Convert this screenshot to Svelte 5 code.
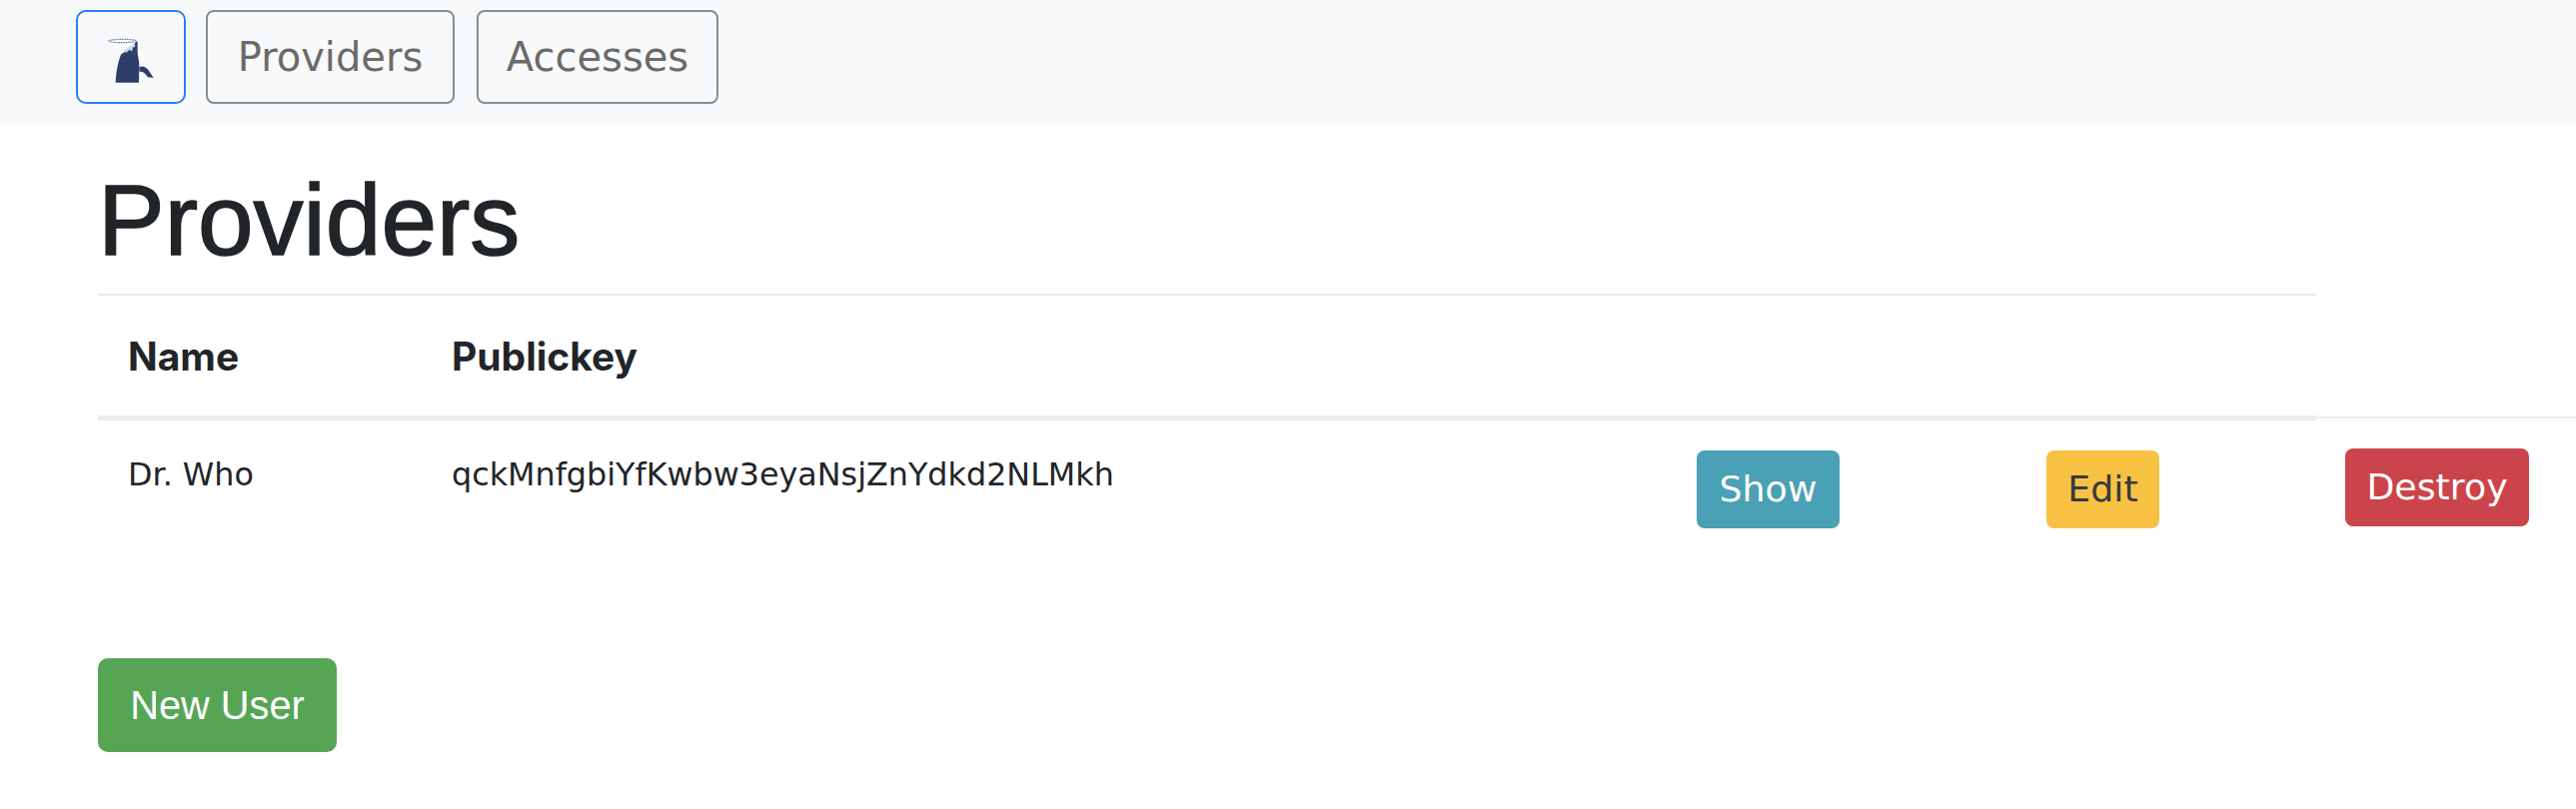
<script>
  let title = 'Providers';
  let rows = [{ name: 'Dr. Who', publickey: 'qckMnfgbiYfKwbw3eyaNsjZnYdkd2NLMkh' }];
</script>

<nav class="topbar">
  <button class="logo-btn" aria-label="Home">
    <svg width="60" height="60" viewBox="0 0 180 180">
      <ellipse cx="68" cy="33" rx="42" ry="5" fill="none" stroke="#5f6c90" stroke-width="3.5" stroke-dasharray="3 2" />
      <!-- body -->
      <path d="M47 158 C49 125 54 95 64 72 C78 66 98 52 108 36 L113 36 L113 70 C115 85 118 95 118 108 L117 158 Z" fill="#2f3d6b" />
      <!-- snowy head -->
      <path d="M66 70 C72 60 90 52 104 38 L106 50 L100 52 L96 64 L88 60 L80 68 L72 64 Z" fill="#c5d6ee" />
      <!-- fin -->
      <path d="M118 112 C128 106 140 112 148 124 L161 144 L144 142 C136 130 128 124 119 126 Z" fill="#2f3d6b" />
    </svg>
  </button>
  <button class="nav-btn providers">Providers</button>
  <button class="nav-btn accesses">Accesses</button>
</nav>

<main class="container">
  <h1>{title}</h1>
  <div class="rule"></div>
  <table>
    <colgroup>
      <col class="c-name" />
      <col class="c-key" />
      <col class="c-show" />
      <col class="c-edit" />
      <col class="c-destroy" />
    </colgroup>
    <thead>
      <tr>
        <th>Name</th>
        <th>Publickey</th>
        <th></th>
        <th></th>
        <th class="thin"></th>
      </tr>
    </thead>
    <tbody>
      {#each rows as row}
        <tr>
          <td>{row.name}</td>
          <td>{row.publickey}</td>
          <td class="act"><a class="btn show" href="#show">Show</a></td>
          <td class="act"><a class="btn edit" href="#edit">Edit</a></td>
          <td class="act high"><a class="btn destroy" href="#destroy">Destroy</a></td>
        </tr>
      {/each}
    </tbody>
  </table>
  <a class="new-user" href="#new">New User</a>
</main>

<style>
  :global(body) {
    background: #fff;
    overflow: hidden;
  }

  .topbar {
    display: flex;
    align-items: flex-start;
    height: 124px;
    box-sizing: border-box;
    padding: 10px 0 0 76px;
    background: #f8f9fa;
  }

  button {
    box-sizing: border-box;
    height: 94px;
    background: transparent;
    font-family: "DejaVu Sans", sans-serif;
    font-size: 40px;
    color: #6c6a68;
    border-radius: 8px;
    padding: 0;
  }

  .logo-btn {
    width: 110px;
    border: 2px solid #2b7fee;
    border-radius: 10px;
    margin-right: 20px;
    display: flex;
    align-items: center;
    justify-content: center;
  }

  .logo-btn svg {
    overflow: visible;
    margin: 6px 0 0 -2px;
  }

  .nav-btn {
    border: 2px solid #868e96;
  }

  .providers {
    width: 249px;
    margin-right: 22px;
  }

  .accesses {
    width: 242px;
  }

  .container {
    width: 2220px;
    margin-left: 98px;
  }

  h1 {
    margin: 0;
    height: 170px;
    box-sizing: border-box;
    padding-top: 41px;
    font-family: "Liberation Sans", sans-serif;
    font-weight: 400;
    font-size: 100px;
    line-height: 1.1;
    color: #212529;
    -webkit-text-stroke: 1.5px #212529;
  }

  .rule {
    height: 2px;
    background: #e9ecef;
  }

  table {
    border-collapse: separate;
    border-spacing: 0;
    table-layout: fixed;
    width: 2482px;
    font-family: "DejaVu Sans", sans-serif;
    font-size: 31.8px;
    color: #212529;
  }

  .c-name { width: 324px; }
  .c-key { width: 1246px; }
  .c-show { width: 350px; }
  .c-edit { width: 300px; }
  .c-destroy { width: 262px; }

  th {
    height: 125px;
    box-sizing: border-box;
    padding: 0 0 0 30px;
    text-align: left;
    font-family: Inter, "Liberation Sans", sans-serif;
    font-size: 39px;
    font-weight: 700;
    border-bottom: 5px solid #e9ecef;
  }

  th.thin {
    border-bottom: 0;
    background: linear-gradient(#e9ecef, #e9ecef) no-repeat left bottom 2px / 100% 2px;
  }

  td {
    padding: 30px 0 0 30px;
    vertical-align: top;
    height: 190px;
    box-sizing: border-box;
    line-height: 1.5;
  }

  td.act {
    padding-top: 30px;
  }

  td.high {
    padding: 28px 0 0 29px;
  }

  .btn {
    display: inline-flex;
    align-items: center;
    justify-content: center;
    box-sizing: border-box;
    height: 78px;
    border-radius: 8px;
    font-size: 36.3px;
    text-decoration: none;
    color: #fff;
  }

  .show {
    width: 143px;
    background: #4aa0b5;
  }

  .edit {
    width: 113px;
    background: #f7c244;
    color: #373a3c;
  }

  .destroy {
    width: 184px;
    background: #cc444b;
  }

  .new-user {
    display: flex;
    align-items: center;
    justify-content: center;
    box-sizing: border-box;
    width: 239px;
    height: 94px;
    margin-top: 48px;
    border-radius: 10px;
    background: #55a555;
    color: #fff;
    text-decoration: none;
    font-family: "Liberation Sans", sans-serif;
    font-size: 39.8px;
  }
</style>
